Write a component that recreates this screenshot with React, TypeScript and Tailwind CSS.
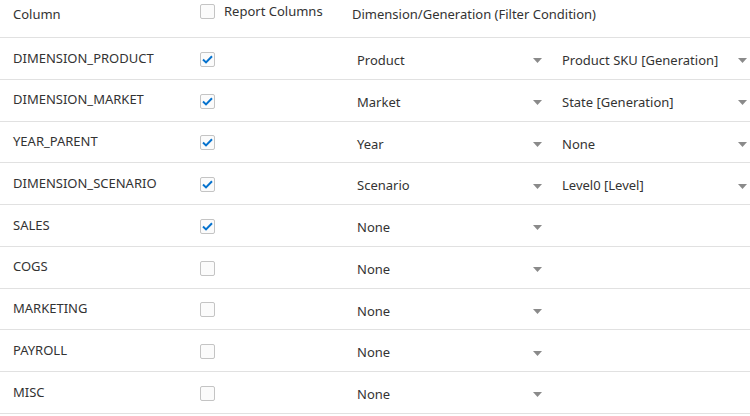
const rows: { name: string; checked: boolean; dim: string; gen?: string }[] = [
  { name: "DIMENSION_PRODUCT", checked: true, dim: "Product", gen: "Product SKU [Generation]" },
  { name: "DIMENSION_MARKET", checked: true, dim: "Market", gen: "State [Generation]" },
  { name: "YEAR_PARENT", checked: true, dim: "Year", gen: "None" },
  { name: "DIMENSION_SCENARIO", checked: true, dim: "Scenario", gen: "Level0 [Level]" },
  { name: "SALES", checked: true, dim: "None" },
  { name: "COGS", checked: false, dim: "None" },
  { name: "MARKETING", checked: false, dim: "None" },
  { name: "PAYROLL", checked: false, dim: "None" },
  { name: "MISC", checked: false, dim: "None" },
];

function Checkbox({ checked }: { checked: boolean }) {
  return (
    <span className="flex h-[15px] w-[15px] items-center justify-center rounded-[2px] border border-[#c4c4c4] bg-[#fbfbfb]">
      {checked && (
        <svg width="11" height="9" viewBox="0 0 11 9">
          <path d="M1 4.6 L4 7.4 L10 1.3" fill="none" stroke="#0572ce" strokeWidth="2" />
        </svg>
      )}
    </span>
  );
}

function Select({ value, className }: { value: string; className: string }) {
  return (
    <div className={`flex items-center justify-between pl-[5px] pt-[5px] ${className}`}>
      <span>{value}</span>
      <svg width="9" height="5" viewBox="0 0 9 5">
        <path d="M0 0 L9 0 L4.5 5 Z" fill="#8a8a8a" />
      </svg>
    </div>
  );
}

export default function App() {
  return (
    <div className="w-[750px] h-[416px] overflow-hidden bg-white text-[13px] text-[#333333]" style={{ fontFamily: '"Segoe UI", "Noto Sans", sans-serif' }}>
      {/* header */}
      <div className="flex h-[38px] border-b border-[#e1e1e1]">
        <div className="w-[200px] pl-[13px] pt-[5px]">Column</div>
        <div className="flex w-[152px] items-start gap-[9px] pt-[4px]">
          <Checkbox checked={false} />
          <span className="-mt-[2px]">Report Columns</span>
        </div>
        <div className="pt-[5px]">Dimension/Generation (Filter Condition)</div>
      </div>

      {rows.map((r) => (
        <div key={r.name} className="flex h-[41.75px] items-center border-b border-[#e1e1e1]">
          <div className="w-[200px] pl-[13px]">{r.name}</div>
          <div className="w-[152px] pt-[2px]">
            <Checkbox checked={r.checked} />
          </div>
          <Select value={r.dim} className="w-[194px] pr-[4px]" />
          {r.gen && <Select value={r.gen} className="ml-[11px] flex-1 pr-[3px]" />}
        </div>
      ))}
    </div>
  );
}
